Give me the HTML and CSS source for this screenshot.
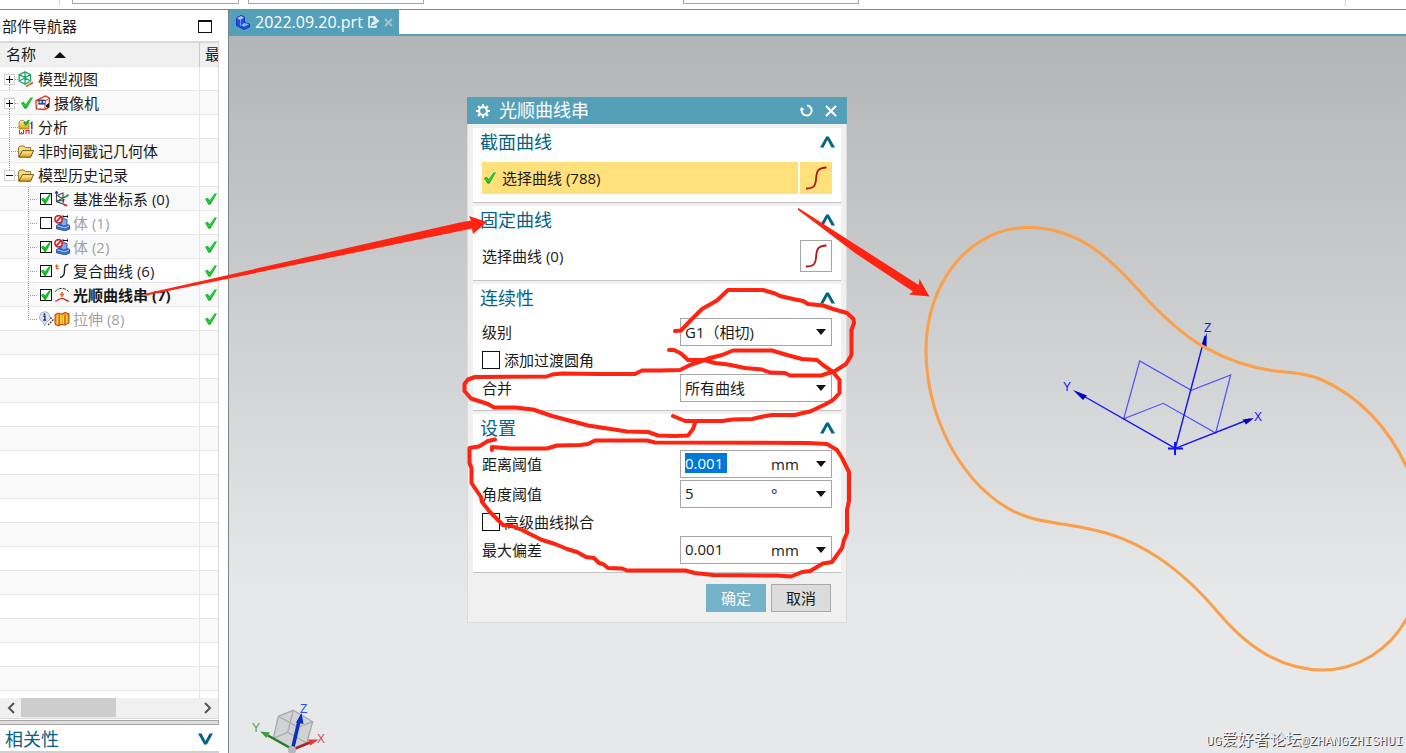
FILE: index.html
```html
<!DOCTYPE html>
<html lang="zh-CN">
<head>
<meta charset="utf-8">
<title>光顺曲线串 - 2022.09.20.prt</title>
<link rel="stylesheet" href="styles.css">
</head>
<body>
<svg class="defs" aria-hidden="true">
  <defs>
    <linearGradient id="gold" x1="0" y1="0" x2="0" y2="1"><stop offset="0" stop-color="#fff3a0"/><stop offset="1" stop-color="#e0a010"/></linearGradient>
    <symbol id="i-tick" viewBox="0 0 12 12"><path d="M0 6 2.600 4.800 4.600 7.200 9.600.4 12 .6 5.400 11.800 3.600 11.800Z" fill="#11b52a"/><path d="M1.600 6.300 4.400 9.400 10 1.900" fill="none" stroke="#35e04a" stroke-width="1"/></symbol>
    <symbol id="i-folder" viewBox="0 0 16 16"><path d="M.6 14V4.400L2 3h4l1.400 1.600h5.200V8" fill="#f7dd7c" stroke="#8a6a1c" stroke-width=".9"/><path d="M.8 14.200 4.400 7.600h11.200l-3 6.600Z" fill="url(#gold)" stroke="#5c430c" stroke-width=".9"/></symbol>
    <symbol id="i-views" viewBox="0 0 16 16"><path d="M7 .8 12.600 3.600V10L7 13.200 1.200 10V3.600ZM1.200 3.600 7 6.600 12.600 3.600M7 .8V13.200M1.200 10 7 7 12.600 10" fill="none" stroke="#1ea468" stroke-width="1.300"/><path d="M8 15.400 15 11.600" stroke="#f0431c" stroke-width="1.700"/><path d="M10 14.600l1-2" stroke="#f5a623"/></symbol>
    <symbol id="i-camera" viewBox="0 0 16 16"><path d="M1 5.600 10.500 1l4 2.200L14 12 9.500 14.500 1.400 14Z" fill="#fff" stroke="#df3218" stroke-width="1.300"/><path d="M1 5.600 10 6v8M10 6l4.500-2.800" fill="none" stroke="#df3218"/><rect x="3.400" y="4.600" width="7" height="5" fill="#2b3a80"/><circle cx="5.500" cy="7" r="1.200" fill="#d5dcff"/><circle cx="9" cy="7" r="1.200" fill="#d5dcff"/><path d="m11 10 3-2v5l-3-1Z" fill="#1c1c28"/></symbol>
    <symbol id="i-analysis" viewBox="0 0 16 16"><path d="M1 10V3l1.600-1.600h3L7 3h4v7Z" fill="url(#gold)" stroke="#a27817" stroke-width=".8"/><path d="m6 3 2 2.600L11 1" fill="none" stroke="#16a832" stroke-width="2"/><path d="M13.800 2.600v7.600M12.400 4.600h1.400" stroke="#2848c8" stroke-width="1.500"/><path d="M1.500 11v3.800h4V11M8 15v-3.400h3V15M13.700 11v4M3.500 13v2" fill="none" stroke="#d52b3c" stroke-width="1.100"/></symbol>
    <symbol id="i-csys" viewBox="0 0 16 16"><path d="M2.500 1v9.500l9 3.400M2.500 10.500l11-5.800M3 4.500 9 2v7.500L3 10M4 5l6 3.500-1 3.500" fill="none" stroke="#3c4844" stroke-width="1.100"/><path d="M1.200 2.400 2.500.4 4 2.400" fill="none" stroke="#2836c8" stroke-width="1.300"/><path d="m11 6 3.600-2.200" stroke="#1aa04a" stroke-width="1.800"/><path d="m9.500 13.200 3.600 1.600" stroke="#d8202c" stroke-width="1.800"/></symbol>
    <symbol id="i-body" viewBox="0 0 16 16"><path d="M2.500 10.500 7 8.200l8.500 2v4L11 15.800l-8.500-2Z" fill="#3c6fd6" stroke="#1a3b8e" stroke-width=".8"/><path d="M7 4.500 10 3.600l3 1v5.600l-3 1-3-1Z" fill="#82aaf2" stroke="#1a3b8e" stroke-width=".8"/><path d="m3 10.800 8 2 4-2" fill="none" stroke="#a8c6ff"/><path d="M9 1.500h4.500M9 .3v2.400M13.500.3v2.400" stroke="#111"/><circle cx="4.600" cy="4.300" r="3.700" fill="#fff" fill-opacity=".6" stroke="#c9202c" stroke-width="1.600"/><path d="M2.200 6.800 7 1.900" stroke="#c9202c" stroke-width="1.700"/></symbol>
    <symbol id="i-composite" viewBox="0 0 16 16"><path d="M14.500 1.500C8 1 12 9 9.600 12.200 8.700 13.600 7.500 14.300 6 14.500" fill="none" stroke="#252525" stroke-width="1.400"/><path d="M2.700 1.500v4.200h2M1 3h3.600" fill="none" stroke="#ec4d1c" stroke-width="1.200"/></symbol>
    <symbol id="i-smooth" viewBox="0 0 16 16"><path d="M1 4.800C5 .2 10.500.4 14.600 4.500" fill="none" stroke="#333" stroke-dasharray="3.400 1"/><path d="M1.200 14.200C4 13.800 5 11.400 8 11.400s4 2.400 7 3" fill="none" stroke="#d61e1e" stroke-width="1.300"/><path d="M8 5v5M6 7.500h4" stroke="#ef5a20" stroke-width="1.400"/></symbol>
    <symbol id="i-info" viewBox="0 0 16 16"><path d="M10 4.500 15 9l-5 5" fill="none" stroke="#333" stroke-width="1.300" stroke-dasharray="2 1"/><path d="M6.500.7a5.400 5.400 0 0 1 1.800 10.500L6.700 15l-1.400-3.800A5.400 5.400 0 0 1 6.500.7Z" fill="#dbe4f1" stroke="#9099a8" stroke-width=".7"/><circle cx="6.500" cy="3.300" r="1" fill="#1d3268"/><path d="M5.300 5.300h1.600v3.500M5 9.100h3.200" fill="none" stroke="#1d3268" stroke-width="1.400"/></symbol>
    <symbol id="i-extrude" viewBox="0 0 16 16"><path d="M1 3.500 5 2l2 1.200L11 1.500l4 1.300V12l-4 2-4-.5L5 15l-4-1.500Z" fill="#f39a1c" stroke="#c2360e"/><path d="M3.500 4.500v8.800M6.800 4v8.800M9.500 4.500v8.600M12.500 4.500v7.800" stroke="#ffe14e" stroke-width="1.400"/><path d="M5.200 4.600V14M11 4.400v9" stroke="#b8320c" stroke-width=".8"/></symbol>
    <symbol id="i-up" viewBox="0 0 15 12"><path d="M0 11.500 6.200.5H8.800L15 11.500H11.500L7.500 4 3.500 11.500Z" fill="#056384"/></symbol>
    <symbol id="i-spline" viewBox="0 0 24 24"><path d="M2 22.500C9 22.500 11.500 20.500 12 13.500 12.500 5 14 1.800 22.500 1.500" fill="none" stroke="#b71414" stroke-width="1.800"/></symbol>
    <symbol id="t-plus" viewBox="0 0 18 24"><rect x="4.500" y="7.500" width="10" height="10" fill="#fff" stroke="#d0d0d0"/><path d="M6 12.500H13M9.500 9V16" stroke="#111"/><path d="M15 12.500H18M9.500 18V24" stroke="#999" stroke-dasharray="1 1"/></symbol>
    <symbol id="t-minus" viewBox="0 0 18 24"><path d="M9.500 0V7" stroke="#999" stroke-dasharray="1 1"/><rect x="4.500" y="7.500" width="10" height="10" fill="#fff" stroke="#d0d0d0"/><path d="M6 12.500H13" stroke="#111"/><path d="M15 12.500H18" stroke="#999" stroke-dasharray="1 1"/></symbol>
    <symbol id="t-leaf" viewBox="0 0 18 24"><path d="M9.500 0V24M9 12.500H18" stroke="#999" stroke-dasharray="1 1"/></symbol>
    <symbol id="t-child" viewBox="0 0 38 24"><path d="M28.500 0V24M28 12.500H38" stroke="#999" stroke-dasharray="1 1"/></symbol>
    <symbol id="t-last" viewBox="0 0 38 24"><path d="M28.500 0V12M28 12.500H38" stroke="#999" stroke-dasharray="1 1"/></symbol>
  </defs>
</svg>

<div class="ribbon" aria-hidden="true">
  <span class="ribbon-sep"></span><span class="ribbon-box"></span><span class="ribbon-box"></span><span class="ribbon-box apart"></span><span class="ribbon-sep end"></span>
</div>

<div class="workspace">
  <aside class="sidebar">
    <header class="panel-title"><h2>部件导航器</h2><button class="maximize" aria-label="最大化"></button></header>
    <div class="tree-panel">
      <table class="tree">
        <colgroup><col class="col-name"><col></colgroup>
        <thead><tr><th scope="col"><span class="sort">名称<svg width="12" height="6" viewBox="0 0 12 6"><path d="M6 0 12 6H0Z" fill="#111"/></svg></span></th><th scope="col" class="state">最</th></tr></thead>
        <tbody>
          <tr><td><div class="node"><svg class="twig"><use href="#t-plus"/></svg><svg class="icon"><use href="#i-views"/></svg><span>模型视图</span></div></td><td></td></tr>
          <tr><td><div class="node"><svg class="twig"><use href="#t-plus"/></svg><svg class="tick lead"><use href="#i-tick"/></svg><svg class="icon"><use href="#i-camera"/></svg><span>摄像机</span></div></td><td></td></tr>
          <tr><td><div class="node"><svg class="twig"><use href="#t-leaf"/></svg><svg class="icon"><use href="#i-analysis"/></svg><span>分析</span></div></td><td></td></tr>
          <tr><td><div class="node"><svg class="twig"><use href="#t-leaf"/></svg><svg class="icon"><use href="#i-folder"/></svg><span>非时间戳记几何体</span></div></td><td></td></tr>
          <tr><td><div class="node"><svg class="twig"><use href="#t-minus"/></svg><svg class="icon"><use href="#i-folder"/></svg><span>模型历史记录</span></div></td><td></td></tr>
          <tr><td><div class="node child"><svg class="twig"><use href="#t-child"/></svg><input type="checkbox" id="f0" checked><svg class="icon"><use href="#i-csys"/></svg><label for="f0">基准坐标系 (0)</label></div></td><td class="state"><svg class="tick"><use href="#i-tick"/></svg></td></tr>
          <tr><td><div class="node child dim"><svg class="twig"><use href="#t-child"/></svg><input type="checkbox" id="f1"><svg class="icon"><use href="#i-body"/></svg><label for="f1">体 (1)</label></div></td><td class="state"><svg class="tick"><use href="#i-tick"/></svg></td></tr>
          <tr><td><div class="node child dim"><svg class="twig"><use href="#t-child"/></svg><input type="checkbox" id="f2" checked><svg class="icon"><use href="#i-body"/></svg><label for="f2">体 (2)</label></div></td><td class="state"><svg class="tick"><use href="#i-tick"/></svg></td></tr>
          <tr><td><div class="node child"><svg class="twig"><use href="#t-child"/></svg><input type="checkbox" id="f6" checked><svg class="icon"><use href="#i-composite"/></svg><label for="f6">复合曲线 (6)</label></div></td><td class="state"><svg class="tick"><use href="#i-tick"/></svg></td></tr>
          <tr><td><div class="node child current"><svg class="twig"><use href="#t-child"/></svg><input type="checkbox" id="f7" checked><svg class="icon"><use href="#i-smooth"/></svg><label for="f7">光顺曲线串 (7)</label></div></td><td class="state"><svg class="tick"><use href="#i-tick"/></svg></td></tr>
          <tr><td><div class="node child dim"><svg class="twig"><use href="#t-last"/></svg><svg class="icon"><use href="#i-info"/></svg><svg class="icon"><use href="#i-extrude"/></svg><span>拉伸 (8)</span></div></td><td class="state"><svg class="tick"><use href="#i-tick"/></svg></td></tr>
        </tbody>
      </table>
    </div>
    <div class="scrollbar">
      <button aria-label="向左滚动"><svg width="8" height="12" viewBox="0 0 8 12"><path d="M7 1 2 6l5 5" fill="none" stroke="#555" stroke-width="2"/></svg></button>
      <div class="track"><div class="thumb"></div></div>
      <button aria-label="向右滚动"><svg width="8" height="12" viewBox="0 0 8 12"><path d="m1 1 5 5-5 5" fill="none" stroke="#555" stroke-width="2"/></svg></button>
    </div>
    <div class="splitter"></div>
    <button class="related"><span>相关性</span><svg class="chev down"><use href="#i-up"/></svg></button>
  </aside>

  <main class="viewer">
    <nav class="tabs">
      <a class="tab" href="#part">
        <svg width="16" height="16" viewBox="0 0 16 16"><path d="M1.500 4 6 1.500 9.500 3v5.500l5 1.500v3L9 15.500 1.500 11.500Z" fill="#1f4fe0" stroke="#1238c0"/><path d="M2 4.200 5.500 6 9 3.500 6 2Z" fill="#a8ccff"/><path d="M5.500 6v6" stroke="#5f93ff"/><path d="m6 11 3.500-2 4.500 1.300-5 2.400Z" fill="#8ab6ff"/></svg>
        <span>2022.09.20.prt</span>
        <svg width="11" height="12" viewBox="0 0 11 12"><path d="M8 4.500V2.500L6.500 1H1v10h7V9M6 1v2.500H8M4 8.500 5 6.500 9.500 4l1 1L6 8Z" fill="none" stroke="#fff" stroke-width="1.400"/></svg>
        <svg width="9" height="9" viewBox="0 0 9 9"><path d="M1 1 8 8M8 1 1 8" stroke="#b9bcc0" stroke-width="2"/></svg>
      </a>
    </nav>
    <div class="canvas" id="part">
      <svg class="scene" width="1177" height="717" viewBox="229 36 1177 717">
        <g fill="none" stroke="#5050ff" stroke-width="1.200"><path d="M1123.700 418.700 1139.700 361 1191.300 390.300 1230.700 375 1215.700 433 1163.300 403.300Z"/></g>
        <g stroke="#1414f0" stroke-width="1.400" fill="none"><path d="M1175.300 448.300 1205 336M1175.300 448.300 1080 394M1175.300 448.300 1250 419"/><path d="M1168 448.500H1183M1175 442V455" stroke-width="2"/></g>
        <g fill="#0000c8"><path d="M1206.700 333 1201 346 1206.500 347.500Z"/><path d="M1073 390 1087 395.500 1083 400Z"/><path d="M1254 418 1242.500 419.500 1246 424.500Z"/></g>
        <g class="axis" fill="#1414f0"><text x="1204" y="332">Z</text><text x="1063" y="391">Y</text><text x="1254" y="421">X</text></g>
        <path d="M1407 468C1390 430 1360 396 1320 379 1307 374 1296 373 1280 371.500 1253 369 1229 361 1203 346.400 1180 333 1159 313 1136.700 288 1107 255 1075 227.500 1028.700 227.500 970 227.500 926 282 926 350 926 430 975 501 1028 517 1045 523 1070 524 1093 529.800 1150 542 1190 579 1220 614.500 1250 650 1285 670 1323 670 1357 670 1390 650 1407 618" fill="none" stroke="#fb9f48" stroke-width="3"/>
        <g stroke="#a9a9ab" stroke-width="1.300" fill="#cbcccd" fill-opacity=".8"><path d="M278.300 716.300 293.300 710.300 312.700 721.700 306.700 743 292 749.300 273.300 738.300Z"/><path d="M278.300 716.300 298.300 727.300 312.700 721.700M298.300 727.300 292 749M293.300 710.300 287.700 732.300 273.300 738.300M287.700 732.300 306.700 743" fill="none"/></g>
        <path d="M292 749 268 735.500" stroke="#247d2b" stroke-width="2.500"/><path d="m260 731.500 10 1-3.500 5.500Z" fill="#37a03e"/>
        <path d="m294 749 16-6.500" stroke="#a62828" stroke-width="2.500"/><path d="m318.500 739.500-10.500 0 2.500 6Z" fill="#e03a3a"/>
        <path d="m293 747 6-26" stroke="#0a2ec0" stroke-width="3.500"/><path d="M301.500 713 296 722.500 303.500 724Z" fill="#0a2ec0"/>
        <circle cx="292" cy="750" r="4" fill="#b7b7b7"/>
        <g class="axis"><text x="300" y="713" fill="#2454ff">Z</text><text x="252" y="732" fill="#4da452">Y</text><text x="317" y="743" fill="#e04444">X</text></g>
      </svg>
      <p class="watermark">UG<span>爱好者论坛</span>@ZHANGZHISHUI</p>

      <form class="dialog" aria-labelledby="dlg">
        <header class="dialog-title">
          <svg width="14" height="14" viewBox="0 0 14 14"><circle cx="7" cy="7" r="4" fill="none" stroke="#fff" stroke-width="2.200"/><path d="M7 0V2.500M7 11.500V14M0 7H2.500M11.500 7H14M2 2 3.800 3.800M10.200 10.200 12 12M12 2 10.200 3.800M3.800 10.200 2 12" stroke="#fff" stroke-width="2"/></svg>
          <h1 id="dlg">光顺曲线串</h1>
          <button type="button" aria-label="重置"><svg width="13" height="13" viewBox="0 0 13 13"><path d="M7 1.500A5 5 0 1 1 1.800 5.500" fill="none" stroke="#fff" stroke-width="1.900"/><path d="M0 6.500 1 3 4.800 5.500Z" fill="#fff"/></svg></button>
          <button type="button" aria-label="关闭"><svg width="12" height="12" viewBox="0 0 12 12"><path d="M1 1 11 11M11 1 1 11" stroke="#fff" stroke-width="2"/></svg></button>
        </header>
        <div class="dialog-body">
          <section class="group">
            <h2>截面曲线<svg class="chev"><use href="#i-up"/></svg></h2>
            <div class="pick active"><div class="pick-label"><svg class="tick"><use href="#i-tick"/></svg><span>选择曲线 (788)</span></div><button type="button" aria-label="选择曲线"><svg width="24" height="24"><use href="#i-spline"/></svg></button></div>
          </section>
          <section class="group">
            <h2>固定曲线<svg class="chev"><use href="#i-up"/></svg></h2>
            <div class="pick"><div class="pick-label"><span>选择曲线 (0)</span></div><button type="button" aria-label="选择固定曲线"><svg width="24" height="24"><use href="#i-spline"/></svg></button></div>
          </section>
          <section class="group">
            <h2>连续性<svg class="chev"><use href="#i-up"/></svg></h2>
            <div class="row"><label for="level">级别</label><span class="combo"><select id="level"><option>G1（相切)</option></select></span></div>
            <div class="row"><label class="check"><input type="checkbox">添加过渡圆角</label></div>
            <div class="row"><label for="merge">合并</label><span class="combo"><select id="merge"><option>所有曲线</option></select></span></div>
          </section>
          <section class="group">
            <h2>设置<svg class="chev"><use href="#i-up"/></svg></h2>
            <div class="row spaced"><label for="dist">距离阈值</label><span class="combo number"><span class="value"><input class="selected" id="dist" type="text" value="0.001"></span><select aria-label="距离单位"><option>mm</option></select></span></div>
            <div class="row spaced"><label for="angle">角度阈值</label><span class="combo number"><span class="value"><input id="angle" type="text" value="5"></span><select aria-label="角度单位"><option>°</option></select></span></div>
            <div class="row"><label class="check"><input type="checkbox">高级曲线拟合</label></div>
            <div class="row"><label for="dev">最大偏差</label><span class="combo number"><span class="value"><input id="dev" type="text" value="0.001"></span><select aria-label="偏差单位"><option>mm</option></select></span></div>
          </section>
        </div>
        <footer class="actions"><button class="ok" type="button">确定</button><button type="button">取消</button></footer>
      </form>
    </div>
  </main>
</div>

<svg class="markup" width="1406" height="753" viewBox="0 0 1406 753" aria-hidden="true">
  <g fill="#ff2312">
    <path d="M146 293.500 460 222.500 471 220.500 469 216 487 222 473 234 472 228.500 460 231 146 295.500Z"/>
    <path d="M798.500 208 918.700 285 919.500 279 929.500 296.500 909 294.500 913 291.500 855 253 797.500 209.500Z"/>
  </g>
  <g fill="none" stroke="#ff2312" stroke-width="4" stroke-linejoin="round" stroke-linecap="round">
    <path d="M675 331 681 330.500 690 321 702 309 717 300.500 728 290H763L775 293.500 780 296 793 299 803 301 808 304 823 305.500 833 309 847 313 853.500 319 854 323 851.500 330V355L846 364 835 371 821 375.500H790L785 373 770 372.500 762 369.500 745 368 728 364.500 715 363 704 360H688L681 353.500 674 350H669"/>
    <path d="M673 416 685 421H722L733 419.500 752 419 763 416.500 772 415H795L803 413 810 411.500 825 404.500 833 400 839.500 393V380L833 372 823 365 817 360 802 359 787 355 772 350.500H733L722 355 710 358 690 365 680 370 660 370.500H642L635 374H598L562 373.500 552 374.500 547 376.500 475 377 468 379.500 464.500 384V391L471 398.500 488 404 494 407.500H515L533 409.500 552 416 588 425.500 627 431.500 648 432 658 435.500 675 436 688 435.500 693 429 695 423"/>
    <path d="M495 439.500 488 441 479 446.500 469.500 448V463L471.500 468V483L481 497 482 502 490 512 503 525 512 526 522 530 542 540 555 544 567 549 577 552 586 557 594 558 599 563 603 564 608 568 622 568.500 627 570.500H685L695 573 713 575 777 575.500 791 576.500 802 572 810 571 823 563.500 832 562 842 548 844 540 847 533V510L849 501V472L842 458 837 450 827 444 808 443 655 442.500 647 440.500H595L588 444 580 445 557 445.500 547 448.500H510L492 447V450"/>
  </g>
</svg>
</body>
</html>
```
FILE: styles.css
```css
* { box-sizing: border-box; }
html, body { height: 100%; }
body {
  margin: 0;
  display: flex;
  flex-direction: column;
  position: relative;
  overflow: hidden;
  background: #fff;
  color: #1a1a1a;
  font: 15px/24px "Open Sans", "Noto Sans CJK SC", sans-serif;
}
h1, h2, p { margin: 0; font-weight: 400; }
button, input, select { font: inherit; color: inherit; margin: 0; padding: 0; border: 0; border-radius: 0; background: none; }
svg { display: block; flex: none; }
.defs { position: absolute; width: 0; height: 0; }

/* toolbar edge above the workspace */
.ribbon { display: flex; height: 10px; padding-left: 59px; border-bottom: 1px solid #7f878b; }
.ribbon-sep { width: 1px; height: 6px; margin-right: 12px; background: #d4d4d4; }
.ribbon-sep.end { margin: 0 60px 0 auto; }
.ribbon-box { width: 176px; height: 4px; margin-right: 9px; border: 1px solid #a6a6a6; border-top: 0; }
.ribbon-box:nth-child(2) { width: 167px; }
.ribbon-box.apart { margin-left: 250px; }

.workspace { display: flex; flex: 1; min-height: 0; }

/* part navigator */
.sidebar { display: flex; flex-direction: column; width: 228px; padding-right: 9px; }
.panel-title { display: flex; align-items: center; justify-content: space-between; height: 31px; padding: 2px 7px 0 2px; }
.panel-title h2 { font-size: 15px; line-height: 22px; padding-bottom: 2px; }
.maximize { width: 14px; height: 13px; border: 1px solid #111; border-top-width: 2px; }
.tree-panel {
  flex: 1;
  min-height: 0;
  overflow: hidden;
  border: solid #d9d9d9;
  border-width: 2px 1px 0 0;
  background:
    linear-gradient(#e6e6e6, #e6e6e6) 199px 0 / 1px 100% no-repeat,
    repeating-linear-gradient(#f9f9f9 0 23px, #e8e8e8 23px 24px, #fff 24px 47px, #e8e8e8 47px 48px);
}
.tree { width: 100%; table-layout: fixed; border-spacing: 0; }
.col-name { width: 199px; }
.tree th, .tree td { height: 24px; padding: 0; font-weight: 400; text-align: left; overflow: hidden; white-space: nowrap; }
.tree th { padding-left: 6px; background: #f0f0f0; border-bottom: 1px solid #e8e8e8; line-height: 23px; }
.tree th.state { padding-left: 5px; border-left: 1px solid #c8c8c8; text-overflow: clip; }
.tree td.state { padding-left: 6px; }
.sort { display: flex; align-items: center; gap: 18px; }
.node { display: flex; align-items: center; height: 24px; }
.twig { width: 18px; height: 24px; }
.child .twig { width: 38px; }
.icon { width: 16px; height: 16px; margin-right: 4px; }
.icon + .icon { margin-left: -4px; margin-right: 3px; }
.tick { width: 12px; height: 12px; }
.tick.lead { margin: 0 2px 0 3px; }
.tick.lead + .icon { margin-right: 3px; }
.child input { margin: 0 2px; }
.child input + .icon { margin-right: 3px; }
.dim { color: #a3a3a3; }
.current { font-weight: 700; }
input[type="checkbox"] { appearance: none; flex: none; width: 12px; height: 12px; border: 1px solid #111; background: #fff; }
input[type="checkbox"]:checked::before {
  content: "";
  display: block;
  height: 10px;
  background: #10bd25;
  clip-path: polygon(0 50%, 24% 36%, 40% 56%, 84% 0, 100% 8%, 48% 100%, 34% 100%);
}
.scrollbar { display: flex; height: 21px; padding-bottom: 1px; border: solid #d9d9d9; border-width: 0 1px 1px 0; background: #f0f0f0; }
.scrollbar button { display: flex; align-items: center; justify-content: center; width: 21px; }
.track { flex: 1; }
.thumb { width: 54%; height: 100%; background: #cdcdcd; }
.splitter { height: 5px; margin-top: 1px; border: 1px solid #a5a5a5; border-left: 0; background: #dedede; }
.related { display: flex; align-items: center; justify-content: space-between; height: 28px; padding: 2px 6px 0 5px; border-bottom: 2px solid #d0d0d0; color: #056384; font-size: 18px; line-height: 26px; }
.chev { width: 15px; height: 12px; }
.chev.down { rotate: 180deg; }

/* graphics window */
.viewer { display: flex; flex-direction: column; flex: 1; min-width: 0; border-left: 1px solid #77858c; }
.tabs { display: flex; height: 26px; border-bottom: 2px solid #55a0b9; }
.tab { display: flex; align-items: center; gap: 5px; padding: 0 6px; background: #55a0b9; color: #fff; font-size: 16px; text-decoration: none; }
.tab svg:first-child { margin-right: -1px; }
.canvas { position: relative; flex: 1; overflow: hidden; background: linear-gradient(#b3b4b6, #e6e8ea 78%); }
.scene { position: absolute; left: 0; top: 0; }
.axis { font: 12px "Liberation Sans", sans-serif; }
.watermark { position: absolute; right: 3px; bottom: 0; color: #f2f2f2; font: 13px/22px "Liberation Mono", monospace; text-shadow: 1px 1px 0 #444; white-space: nowrap; }
.watermark span { font: 16px/22px "Noto Sans CJK SC", sans-serif; }

/* dialog window */
.dialog { position: absolute; left: 238px; top: 61px; width: 380px; border: 1px solid #dcdcdc; border-top: 0; background: #f0f0f0; }
.dialog-title { display: flex; align-items: center; gap: 12px; height: 27px; margin: 0 -1px; padding: 0 10px 0 9px; background: #55a0b9; color: #fff; }
.dialog-title h1 { flex: 1; margin-left: -3px; font-size: 18px; line-height: 27px; }
.dialog-body { display: grid; gap: 3px; padding: 4px 5px 0; }
.group { display: flex; flex-direction: column; padding: 0 9px 8px; border-bottom: 1px solid #c4c4c4; background: #fff; }
.group h2 { display: flex; align-items: center; justify-content: space-between; height: 30px; margin: 0 -3px 4px -2px; padding-bottom: 2px; color: #056384; font-size: 18px; line-height: 28px; }
.group:has(.spaced) h2 { margin-bottom: 4px; }
.pick { display: flex; gap: 2px; height: 32px; }
.pick-label { display: flex; flex: 1; align-items: center; gap: 6px; }
.pick-label .tick { margin-left: 2px; }
.pick button { display: grid; place-items: center; width: 32px; border: 1px solid #a6a6a6; }
.active .pick-label, .active button { background: #ffe07a; }
.active button { border-color: #ffe07a; }
.row { display: flex; align-items: center; justify-content: space-between; height: 28px; }
.row.spaced { margin-top: 2px; }
.check { display: flex; align-items: center; gap: 4px; }
.check input[type="checkbox"] { width: 18px; height: 18px; }
.combo { position: relative; display: flex; width: 152px; height: 28px; border: 1px solid #a6a6a6; background: #fff; }
.combo::after { content: ""; position: absolute; right: 5px; top: 10px; border: solid transparent; border-width: 6px 5px 0; border-top-color: #111; pointer-events: none; }
.combo select { appearance: none; flex: 1; min-width: 0; padding-left: 4px; }
.number .value { width: 90px; padding: 2px 4px; }
.number .value input { display: block; width: 100%; height: 20px; line-height: 20px; }
.number .value .selected { width: 42px; background: #0078d7; color: #fff; }
.number select { padding-left: 0; }
.actions { display: flex; justify-content: flex-end; gap: 5px; padding: 11px 15px 10px; }
.actions button { width: 60px; height: 28px; border: 1px solid #a9a9a9; background: #dcdcdc; }
.actions .ok { border-color: #73b2c8; background: #73b2c8; color: #fff; }

/* hand-drawn notes over the window */
.markup { position: absolute; left: 0; top: 0; pointer-events: none; }
```
